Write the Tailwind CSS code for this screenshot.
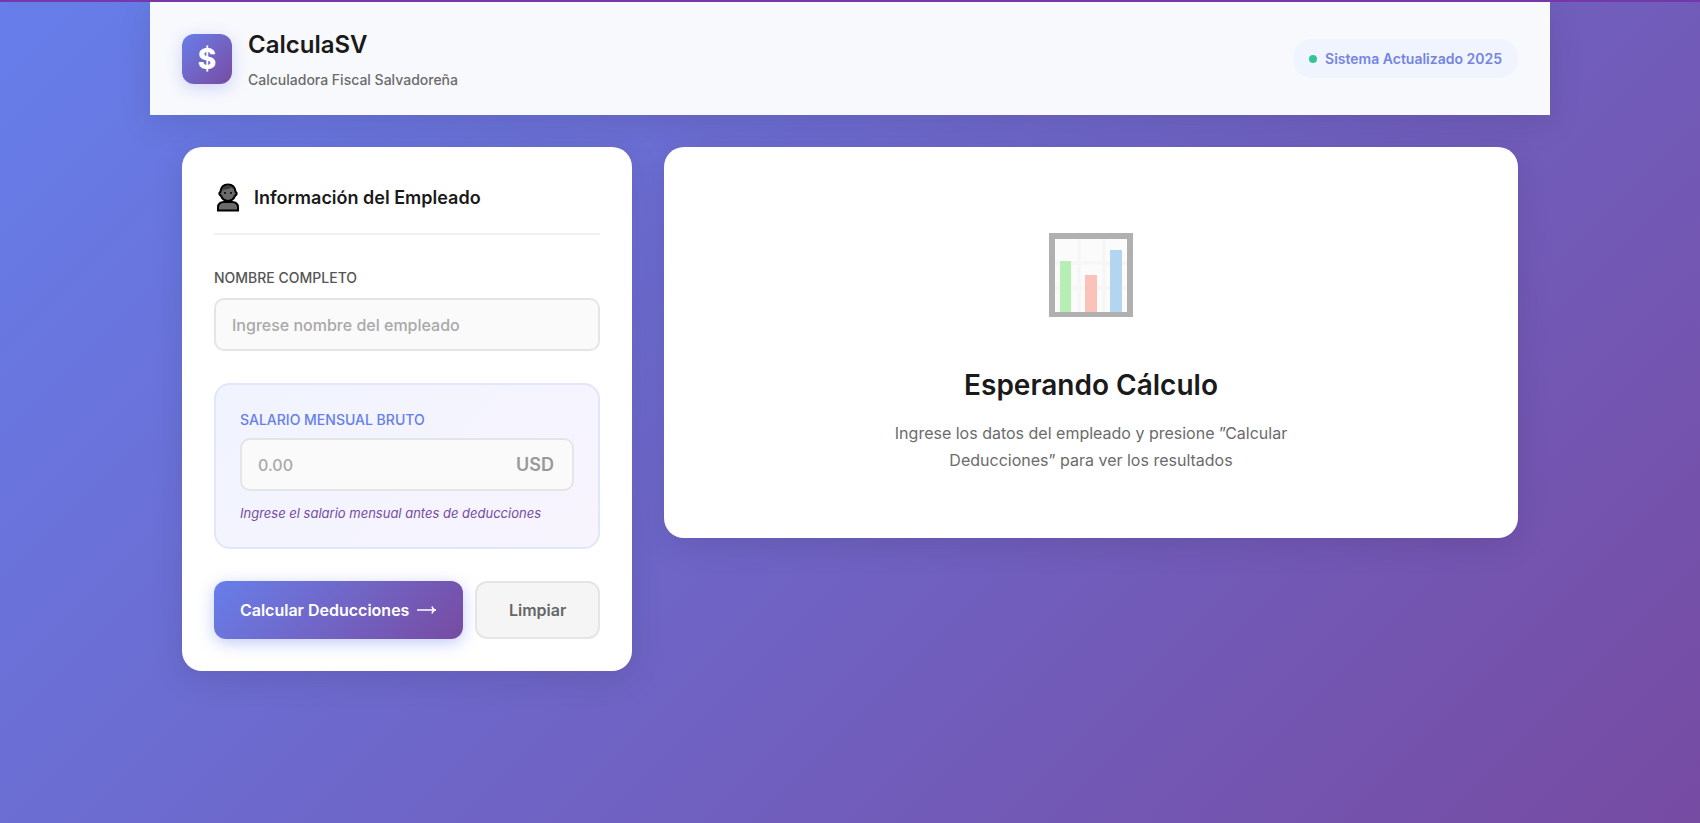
<!DOCTYPE html>
<html lang="es">
<head>
    <meta charset="UTF-8">
    <meta name="viewport" content="width=device-width, initial-scale=1.0">
    <title>CalculaSV - Calculadora Fiscal Salvadoreña</title>

    <!-- Tailwind CSS for styling -->
    <script src="https://cdn.jsdelivr.net/npm/@tailwindcss/browser@4"></script>

    <style>
        body {
            font-family: 'Inter', sans-serif;
        }
    </style>
</head>
<body class="min-h-screen border-t-2 border-[#7637aa] bg-[linear-gradient(135deg,#667eea_0%,#764ba2_100%)] bg-origin-border text-[#1a1a1a]">

    <div class="max-w-[1400px] mx-auto">

        <!-- Header -->
        <header class="flex flex-wrap items-center justify-between gap-4 px-8 py-6 bg-[#f8f9fd] shadow-[0_8px_32px_rgba(0,0,0,0.1)]">
            <div class="flex items-center gap-4">
                <div class="flex items-center justify-center size-[50px] rounded-xl bg-linear-135 from-[#667eea] to-[#764ba2] text-white text-[28px] font-extrabold shadow-[0_4px_16px_rgba(102,126,234,0.3)]">$</div>
                <div>
                    <h1 class="text-2xl leading-[38px] font-semibold mb-1">CalculaSV</h1>
                    <p class="text-sm leading-[23px] font-medium text-[#6b6b6b]">Calculadora Fiscal Salvadoreña</p>
                </div>
            </div>
            <div class="flex items-center gap-2 px-4 py-2 rounded-full bg-[#f0f4ff] text-[#7484e0] text-sm leading-[23px] font-semibold">
                <span class="size-2 rounded-full bg-[#34c498]"></span>
                Sistema Actualizado 2025
            </div>
        </header>

        <!-- Main Content -->
        <main class="grid grid-cols-1 lg:grid-cols-[450px_1fr] items-start gap-8 p-8">

            <!-- Employee Form -->
            <section class="p-8 bg-white rounded-[20px] shadow-[0_8px_32px_rgba(0,0,0,0.1)]">
                <div class="flex items-center gap-3 pb-4 mb-8 border-b-2 border-[#f0f0f0]">
                    <svg class="w-7 h-[38px]" viewBox="0 0 28 38" fill="#6b6b6b" stroke="#000" stroke-width="2" aria-hidden="true">
                        <path d="M4 31.500V28.500c0-4 2.500-5.500 6-5.500h8c3.500 0 6 1.500 6 5.500v3z"/>
                        <path d="M6.300 13C7 8 10 5.500 14 5.500s7 2.500 7.700 7.500c1.500 .8 1.300 2.800-.5 3.500C19.800 19.800 17.500 22 14 22s-5.800-2.200-7.200-5.500c-1.800-.7-2-2.700-.5-3.500z"/>
                        <path d="M8 11.500C8.500 8.500 10.500 6.500 14 6.500s5.500 1.500 6.200 4L17 8.500C14.500 11 11 9.500 8 11.500z" fill="#3a3a3a" stroke="none"/>
                        <circle cx="11" cy="14" r="1" fill="#000" stroke="none"/>
                        <circle cx="17" cy="14" r="1" fill="#000" stroke="none"/>
                    </svg>
                    <h2 class="text-lg font-semibold">Información del Empleado</h2>
                </div>

                <form id="salary-form">
                    <!-- Name Input -->
                    <div class="mb-8">
                        <label for="nombre" class="block mb-2.5 text-sm leading-[21px] font-medium uppercase text-[#555555]">Nombre Completo</label>
                        <input
                            type="text"
                            id="nombre"
                            placeholder="Ingrese nombre del empleado"
                            class="block w-full h-[53px] px-4 bg-[#fafafa] border-2 border-[#e5e5e5] rounded-[10px] text-base font-medium placeholder-[#a9a9a9] focus:outline-none focus:border-[#667eea]"
                        >
                    </div>

                    <!-- Salary Input -->
                    <div class="mb-8 p-6 rounded-2xl border-2 border-[#e0e7fc] bg-linear-135 from-[#f0f4ff] to-[#f8f4fe]">
                        <label for="salario" class="block mb-2 text-sm leading-[21px] font-medium uppercase text-[#667eea]">Salario Mensual Bruto</label>
                        <div class="relative">
                            <input
                                type="text"
                                inputmode="decimal"
                                id="salario"
                                placeholder="0.00"
                                class="block w-full h-[53px] pl-4 pr-16 bg-[#fafafa] border-2 border-[#e5e5e5] rounded-[10px] text-base font-medium placeholder-[#a9a9a9] focus:outline-none focus:border-[#667eea]"
                            >
                            <span class="absolute right-5 inset-y-0 flex items-center text-lg font-semibold text-[#999999]">USD</span>
                        </div>
                        <p class="mt-3 text-[13px] leading-5 italic text-[#764ba2]">Ingrese el salario mensual antes de deducciones</p>
                    </div>

                    <!-- Buttons -->
                    <div class="grid grid-cols-[2fr_1fr] gap-3">
                        <button type="submit" class="flex items-center justify-center gap-2 h-[58px] rounded-xl bg-linear-135 from-[#667eea] to-[#764ba2] text-white text-base font-semibold shadow-[0_4px_16px_rgba(102,126,234,0.4)]">
                            Calcular Deducciones
                            <svg class="w-5 h-3" viewBox="0 0 20 12" fill="none" stroke="currentColor" stroke-width="1.500" aria-hidden="true">
                                <path d="M0 6h19M15 2.500C15.500 4.500 17 6 19 6c-2 0-3.500 1.500-4 3.500"/>
                            </svg>
                        </button>
                        <button type="reset" class="h-[58px] rounded-xl bg-[#f5f5f5] border-2 border-[#e5e5e5] text-[#666666] text-base font-semibold">Limpiar</button>
                    </div>
                </form>
            </section>

            <!-- Results -->
            <section class="flex flex-col items-center p-16 bg-white rounded-[20px] text-center shadow-[0_8px_32px_rgba(0,0,0,0.1)]">
                <div class="flex items-center justify-center h-32 mb-6">
                    <svg class="size-[84px]" viewBox="0 0 84 84" aria-hidden="true">
                        <path d="M0 0h84v84H0z" fill="#b0b0b0"/>
                        <path d="M6 6h72v73H6z" fill="#fbfbfb"/>
                        <path d="M30 6v73M55 6v73M6 30h72M6 55h72" stroke="#f6f6f6" stroke-width="3"/>
                        <path d="M11 28h11v51H11z" fill="#b7eeb3"/>
                        <path d="M36 42h12v37H36z" fill="#fac2b9"/>
                        <path d="M61 17h12v62H61z" fill="#b2d5f1"/>
                    </svg>
                </div>
                <h2 class="mb-3 text-[28px] leading-[45px] font-semibold">Esperando Cálculo</h2>
                <p class="max-w-[400px] text-base leading-[27px] text-[#6b6b6b]">Ingrese los datos del empleado y presione ”Calcular Deducciones” para ver los resultados</p>
            </section>
        </main>
    </div>

    <script>
        const form = document.getElementById('salary-form');
        form.addEventListener('submit', (event) => {
            event.preventDefault();
        });
    </script>
</body>
</html>
